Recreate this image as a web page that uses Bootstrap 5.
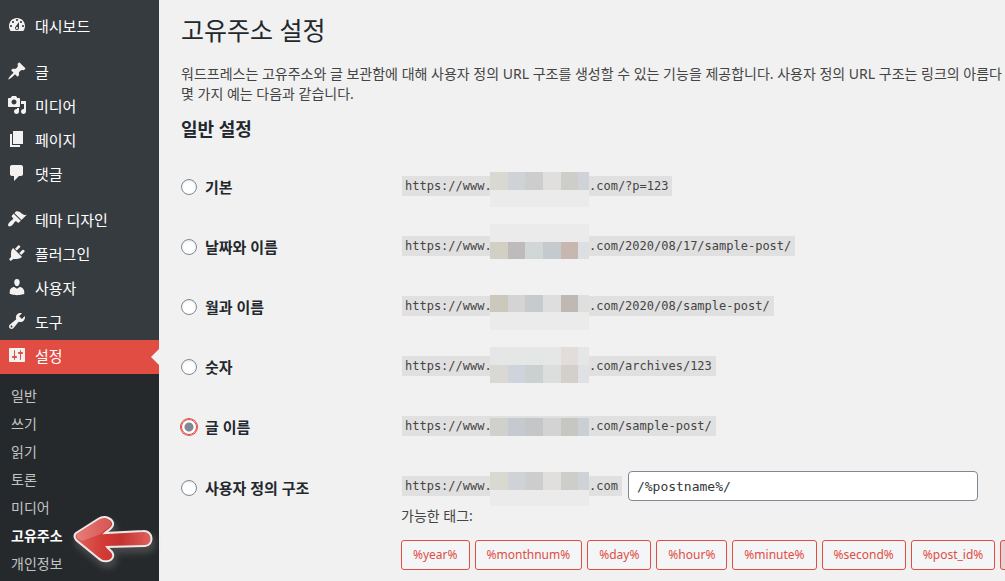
<!DOCTYPE html>
<html lang="ko">
<head>
<meta charset="utf-8">
<meta name="viewport" content="width=device-width, initial-scale=1">
<title>고유주소 설정</title>
<link href="https://cdn.jsdelivr.net/npm/bootstrap@5.3.0/dist/css/bootstrap.min.css" rel="stylesheet">
<style>
body{background:#f1f1f1;color:#444;font:14px/20px "Noto Sans","Noto Sans CJK KR",sans-serif;overflow:hidden}
.admin-side{flex:0 0 159px;background:#363b3f;padding-top:10px}
.menu-link{display:flex;align-items:center;gap:8px;height:34px;padding:0 0 2px 7px;color:#fff;font-size:15px;text-decoration:none;position:relative}
.menu-link svg{width:20px;height:20px;margin-bottom:2px;fill:#f3f2f1}
.menu-gap{height:12px}
.menu-link.current{background:#e14d43}
.menu-link.current::after{content:"";position:absolute;right:0;top:9px;border:8px solid transparent;border-left:0;border-right-color:#f1f1f1}
.submenu{background:#26292c;padding:8px 0}
.submenu a{display:block;line-height:28px;padding-left:11px;color:#c3c4c5;text-decoration:none}
.submenu .here{color:#fff;font-weight:600;position:relative}
.pointer{position:absolute;left:60px;top:-22px;z-index:2;overflow:visible}
.admin-main{padding:12px 0 0 22px;white-space:nowrap}
h1{font-size:25px;line-height:36px;font-weight:400;color:#23282d;margin:0 0 16px}
h2{font-size:18px;line-height:26px;font-weight:600;color:#23282d;margin:12px 0 15px}
.setting{display:grid;grid-template-columns:220px 1fr;min-height:60px;align-items:start;padding-top:18px}
.setting label{color:#23282d;font-size:15px;line-height:24px;font-weight:600;display:flex;align-items:center;gap:8px}
.setting input[type=radio]{width:16px;height:16px;margin:0;border:1px solid #7e8993;background:#fff;float:none;box-shadow:inset 0 1px 2px rgba(0,0,0,.1)}
.setting input[type=radio]:checked{border-color:#e14d43;box-shadow:0 0 0 1px #e14d43;background:radial-gradient(circle,#7e8993 0 4px,#fff 5px)}
.setting-custom{padding-top:14px}
.setting-custom label{padding-top:5px}
.url{display:inline-flex;height:20px;line-height:20px;padding:0 4px 0 3px;margin-left:1px;background:#e0e0e0;color:#444;font-family:"DejaVu Sans Mono",monospace;font-size:12px}
.url-start{width:85px}
.masked{width:99px;position:relative}
.masked svg{position:absolute;left:0;top:-4px}
.masked .m-high{top:-12px}.masked .m-mid{top:-9px}.masked .m-near{top:-1px}.masked .m-low{top:2px}
.structure{width:350px;height:30px;margin-left:6px;border:1px solid #7e8993;border-radius:4px;background:#fff;color:#32373c;font:13px "DejaVu Sans Mono",monospace;padding:0 8px}
.tag-hint{margin:5px 0 14px}
.tags{gap:5px}
.tag-btn{flex:none;height:30px;padding:0 11px;border:1px solid #e14d43;border-radius:3px;background:#f3f5f6;color:#e14d43;font-size:12px;line-height:28px}
.tag-btn[aria-pressed=true]{background:#eccfd1}
</style>
</head>
<body>
<div class="d-flex min-vh-100">
<nav class="admin-side" aria-label="관리자 메뉴">
<a class="menu-link" href="#"><svg viewBox="0 0 20 20"><path fill-rule="evenodd" d="M3.76 16h12.48c1.1-1.37 1.76-3.11 1.76-5 0-4.42-3.58-8-8-8s-8 3.58-8 8c0 1.89.66 3.63 1.76 5zM10 4c.55 0 1 .45 1 1s-.45 1-1 1-1-.45-1-1 .45-1 1-1zM6 6c.55 0 1 .45 1 1s-.45 1-1 1-1-.45-1-1 .45-1 1-1zm8 0c.55 0 1 .45 1 1s-.45 1-1 1-1-.45-1-1 .45-1 1-1zm-5.37 5.55L12 7v6c0 1.1-.9 2-2 2s-2-.9-2-2c0-.57.24-1.08.63-1.45zM4 10c.55 0 1 .45 1 1s-.45 1-1 1-1-.45-1-1 .45-1 1-1zm12 0c.55 0 1 .45 1 1s-.45 1-1 1-1-.45-1-1 .45-1 1-1zm-5 3c0-.55-.45-1-1-1s-1 .45-1 1 .45 1 1 1 1-.45 1-1z"/></svg>대시보드</a>
<div class="menu-gap"></div>
<a class="menu-link" href="#"><svg viewBox="0 0 20 20"><path d="M10.44 3.02l1.82-1.82 6.36 6.35-1.83 1.82c-1.05-.68-2.48-.57-3.41.36l-.75.75c-.92.93-1.04 2.35-.35 3.41l-1.83 1.82-2.41-2.41-2.8 2.79c-.42.42-3.38 2.71-3.8 2.29s1.86-3.39 2.28-3.81l2.79-2.79L4.1 9.36l1.83-1.82c1.05.69 2.48.57 3.4-.36l.75-.75c.93-.92 1.05-2.35.36-3.41z"/></svg>글</a>
<a class="menu-link" href="#"><svg viewBox="0 0 20 20"><path fill-rule="evenodd" d="M13 11V4c0-.55-.45-1-1-1h-1.67L9 1H5L3.67 3H2c-.55 0-1 .45-1 1v7c0 .55.45 1 1 1h10c.55 0 1-.45 1-1zM7 4.5c1.38 0 2.5 1.12 2.5 2.5S8.38 9.5 7 9.5 4.5 8.38 4.5 7 5.62 4.5 7 4.5zM14 6h5v10.5c0 1.38-1.12 2.5-2.5 2.5S14 17.88 14 16.5s1.12-2.5 2.5-2.5c.17 0 .34.02.5.05V9h-3V6zm-4 8.05V13h2v3.5c0 1.38-1.12 2.5-2.5 2.5S7 17.88 7 16.5 8.12 14 9.5 14c.17 0 .34.02.5.05z"/></svg>미디어</a>
<a class="menu-link" href="#"><svg viewBox="0 0 20 20"><path d="M6 15V2h10v13H6zm-1 1h8v2H3V5h2v11z"/></svg>페이지</a>
<a class="menu-link" href="#"><svg viewBox="0 0 20 20"><path d="M5 2h9c1.1 0 2 .9 2 2v7c0 1.1-.9 2-2 2h-2l-5 5v-5H5c-1.1 0-2-.9-2-2V4c0-1.1.9-2 2-2z"/></svg>댓글</a>
<div class="menu-gap"></div>
<a class="menu-link" href="#"><svg viewBox="0 0 20 20"><path d="M14.48 11.06L7.41 3.99l1.5-1.5c.5-.56 2.3-.47 3.51.32 1.21.8 1.43 1.28 2.91 2.1 1.18.64 2.45 1.26 4.45.85zm-.71.71L6.7 4.7 4.93 6.47c-.39.39-.39 1.02 0 1.41l1.06 1.06c.39.39.39 1.03 0 1.42-.6.6-1.43 1.11-2.21 1.69-.35.26-.7.53-1.01.84C1.43 14.23.4 16.08 1.4 17.07c.99 1 2.84-.03 4.18-1.36.31-.31.58-.66.85-1.02.57-.78 1.08-1.61 1.69-2.21.39-.39 1.02-.39 1.41 0l1.06 1.06c.39.39 1.02.39 1.41 0z"/></svg>테마 디자인</a>
<a class="menu-link" href="#"><svg viewBox="0 0 20 20"><path d="M13.11 4.36L9.87 7.6 8 5.73l3.24-3.24c.35-.34 1.05-.2 1.56.32.52.51.66 1.21.31 1.55zm-8 1.77l.91-1.12 9.01 9.01-1.19.84c-.71.71-2.63 1.16-3.82 1.16H6.14L4.9 17.26c-.59.59-1.54.59-2.12 0-.59-.58-.59-1.53 0-2.12l1.24-1.24v-3.88c0-1.13.4-3.19 1.09-3.89zm7.26 3.97l3.24-3.24c.34-.35 1.04-.21 1.55.31.52.51.66 1.21.31 1.55l-3.24 3.25z"/></svg>플러그인</a>
<a class="menu-link" href="#"><svg viewBox="0 0 20 20"><path d="M10 9.25c-2.27 0-2.73-3.44-2.73-3.44C7 4.02 7.82 2 9.97 2c2.16 0 2.98 2.02 2.71 3.81 0 0-.41 3.44-2.68 3.44zm0 2.57L12.72 10c2.39 0 4.52 2.33 4.52 4.53v2.49s-3.65 1.13-7.24 1.13c-3.65 0-7.24-1.13-7.24-1.13v-2.49c0-2.25 1.94-4.48 4.47-4.48z"/></svg>사용자</a>
<a class="menu-link" href="#"><svg viewBox="0 0 20 20"><path fill-rule="evenodd" d="M16.68 9.77c-1.34 1.34-3.3 1.67-4.95.99l-5.41 6.52c-.99.99-2.59.99-3.58 0s-.99-2.59 0-3.57l6.52-5.42c-.68-1.65-.35-3.61.99-4.95 1.28-1.28 3.12-1.62 4.72-1.06l-2.89 2.89 2.82 2.82 2.86-2.87c.53 1.58.18 3.39-1.08 4.65zM3.81 16.21c.4.39 1.04.39 1.43 0 .4-.4.4-1.04 0-1.43-.39-.4-1.03-.4-1.43 0-.39.39-.39 1.03 0 1.43z"/></svg>도구</a>
<a class="menu-link current" href="#"><svg viewBox="0 0 20 20"><path fill-rule="evenodd" d="M18 16V4c0-.55-.45-1-1-1H3c-.55 0-1 .45-1 1v12c0 .55.45 1 1 1h14c.55 0 1-.45 1-1zM8 11h1c.55 0 1 .45 1 1s-.45 1-1 1H8v1.5c0 .28-.22.5-.5.5s-.5-.22-.5-.5V13H6c-.55 0-1-.45-1-1s.45-1 1-1h1V5.500c0-.28.22-.5.5-.5s.5.22.5.5V11zm5-2h-1c-.55 0-1-.45-1-1s.45-1 1-1h1V5.500c0-.28.22-.5.5-.5s.5.22.5.5V7h1c.55 0 1 .45 1 1s-.45 1-1 1h-1v5.500c0 .28-.22.5-.5.5s-.5-.22-.5-.5V9z"/></svg>설정</a>
<div class="submenu">
<a href="#">일반</a><a href="#">쓰기</a><a href="#">읽기</a><a href="#">토론</a><a href="#">미디어</a>
<a class="here" href="#" aria-current="page">고유주소
<svg class="pointer" width="110" height="64" viewBox="60 500 110 64" aria-hidden="true">
<defs><linearGradient id="red" x1="0" y1="0" x2="1" y2="0"><stop offset="0" stop-color="#e0635f"/><stop offset=".38" stop-color="#d23a35"/><stop offset=".6" stop-color="#c5322f"/><stop offset="1" stop-color="#e0625f"/></linearGradient>
<filter id="soft" x="-30%" y="-30%" width="160%" height="160%"><feGaussianBlur stdDeviation="3"/></filter>
<path id="arrow" d="M76 533 98 519C106 514 114 520 113 525C112 529 107 531 105 533L143 531C154 530 154 546 145 546L107 547C109 550 115 552 113 557C111 562 103 563 98 558L76 540Q73 536 76 533Z"/></defs>
<use href="#arrow" transform="translate(2 5)" fill="#777" stroke="#777" stroke-width="4" opacity=".4" filter="url(#soft)"/>
<use href="#arrow" fill="url(#red)" stroke="#eee8e8" stroke-width="2"/>
<path d="M77 534 98 520C105 516 112 520 111 525C109 529 103 530 101 534Q90 538 82 541L77 538Z" fill="#fff" opacity=".18"/>
</svg></a>
<a href="#">개인정보</a>
</div>
</nav>
<main class="admin-main flex-grow-1 overflow-hidden">
<h1>고유주소 설정</h1>
<p class="mb-0">워드프레스는 고유주소와 글 보관함에 대해 사용자 정의 URL 구조를 생성할 수 있는 기능을 제공합니다. 사용자 정의 URL 구조는 링크의 아름다<br>몇 가지 예는 다음과 같습니다.</p>
<h2>일반 설정</h2>
<form>
<div class="setting"><label><input class="form-check-input" type="radio" name="permalink">기본</label>
<div><code class="url"><span class="url-start">https://www.</span><span class="masked"><svg width="99" height="35"><path fill="#ebebeb" d="M0 0h99v35H0z"/><path fill="#d9d9d1" d="M0 0h18v18H0z"/><path fill="#cfd3d8" d="M18 0h17v18H18z"/><path fill="#cdcdce" d="M35 0h18v18H35z"/><path fill="#e0dfde" d="M53 0h18v18H53z"/><path fill="#cdcdca" d="M71 0h17v18H71z"/><path fill="#cfd3d8" d="M88 0h11v18H88z"/></svg></span><span>.com/?p=123</span></code></div></div>
<div class="setting"><label><input class="form-check-input" type="radio" name="permalink">날짜와 이름</label>
<div><code class="url"><span class="url-start">https://www.</span><span class="masked"><svg class="m-high" width="99" height="35"><path fill="#ebebeb" d="M0 0h99v18H0z"/><path fill="#d2d0c4" d="M0 18h18v17H0z"/><path fill="#bfbbbc" d="M18 18h17v17H18z"/><path fill="#d1d7d6" d="M35 18h18v17H35z"/><path fill="#c4cacd" d="M53 18h18v17H53z"/><path fill="#c7b7b0" d="M71 18h17v17H71z"/><path fill="#dcdfe3" d="M88 18h11v17H88z"/></svg></span><span>.com/2020/08/17/sample-post/</span></code></div></div>
<div class="setting"><label><input class="form-check-input" type="radio" name="permalink">월과 이름</label>
<div><code class="url"><span class="url-start">https://www.</span><span class="masked"><svg class="m-near" width="99" height="35"><path fill="#ebebeb" d="M0 0h99v35H0z"/><path fill="#cdc8bc" d="M0 0h18v17H0z"/><path fill="#d4d4d5" d="M18 0h17v17H18z"/><path fill="#c6cccd" d="M35 0h18v17H35z"/><path fill="#dededf" d="M53 0h18v17H53z"/><path fill="#c0b9b3" d="M71 0h17v17H71z"/><path fill="#dfdfdf" d="M88 0h11v17H88z"/></svg></span><span>.com/2020/08/sample-post/</span></code></div></div>
<div class="setting"><label><input class="form-check-input" type="radio" name="permalink">숫자</label>
<div><code class="url"><span class="url-start">https://www.</span><span class="masked"><svg class="m-mid" width="99" height="36"><path fill="#e5e6e6" d="M0 0h99v18H0z"/><path fill="#e2dcda" d="M71 0h17v18H71z"/><path fill="#d9d8d3" d="M0 18h18v18H0z"/><path fill="#cfd4dc" d="M18 18h17v18H18z"/><path fill="#cbd0d1" d="M35 18h18v18H35z"/><path fill="#dcdddd" d="M53 18h18v18H53z"/><path fill="#d3cfca" d="M71 18h17v18H71z"/><path fill="#dfe1e4" d="M88 18h11v18H88z"/></svg></span><span>.com/archives/123</span></code></div></div>
<div class="setting"><label><input class="form-check-input" type="radio" name="permalink" checked>글 이름</label>
<div><code class="url"><span class="url-start">https://www.</span><span class="masked"><svg class="m-low" width="99" height="18"><path fill="#d1d1cb" d="M0 0h18v18H0z"/><path fill="#c6cad0" d="M18 0h17v18H18z"/><path fill="#c5c6c8" d="M35 0h18v18H35z"/><path fill="#d3d3d3" d="M53 0h18v18H53z"/><path fill="#c6c6c3" d="M71 0h17v18H71z"/><path fill="#cacfd3" d="M88 0h11v18H88z"/></svg></span><span>.com/sample-post/</span></code></div></div>
<div class="setting setting-custom"><label><input class="form-check-input" type="radio" name="permalink">사용자 정의 구조</label>
<div><div class="d-flex align-items-center"><code class="url"><span class="url-start">https://www.</span><span class="masked"><svg width="99" height="34"><path fill="#ebebeb" d="M0 0h99v34H0z"/><path fill="#d9d9d1" d="M0 0h18v18H0z"/><path fill="#cfd3d8" d="M18 0h17v18H18z"/><path fill="#cdcdce" d="M35 0h18v18H35z"/><path fill="#e0dfde" d="M53 0h18v18H53z"/><path fill="#cdcdca" d="M71 0h17v18H71z"/><path fill="#cfd3d8" d="M88 0h11v18H88z"/></svg></span><span>.com</span></code>
<input class="structure" type="text" value="/%postname%/" aria-label="사용자 정의 구조"></div>
<p class="tag-hint">가능한 태그:</p>
<div class="d-flex tags"><button type="button" class="tag-btn">%year%</button><button type="button" class="tag-btn">%monthnum%</button><button type="button" class="tag-btn">%day%</button><button type="button" class="tag-btn">%hour%</button><button type="button" class="tag-btn">%minute%</button><button type="button" class="tag-btn">%second%</button><button type="button" class="tag-btn">%post_id%</button><button type="button" class="tag-btn" aria-pressed="true" aria-label="postname"></button></div>
</div></div>
</form>
</main>
</div>
<script src="https://cdn.jsdelivr.net/npm/bootstrap@5.3.0/dist/js/bootstrap.bundle.min.js"></script>
</body>
</html>
